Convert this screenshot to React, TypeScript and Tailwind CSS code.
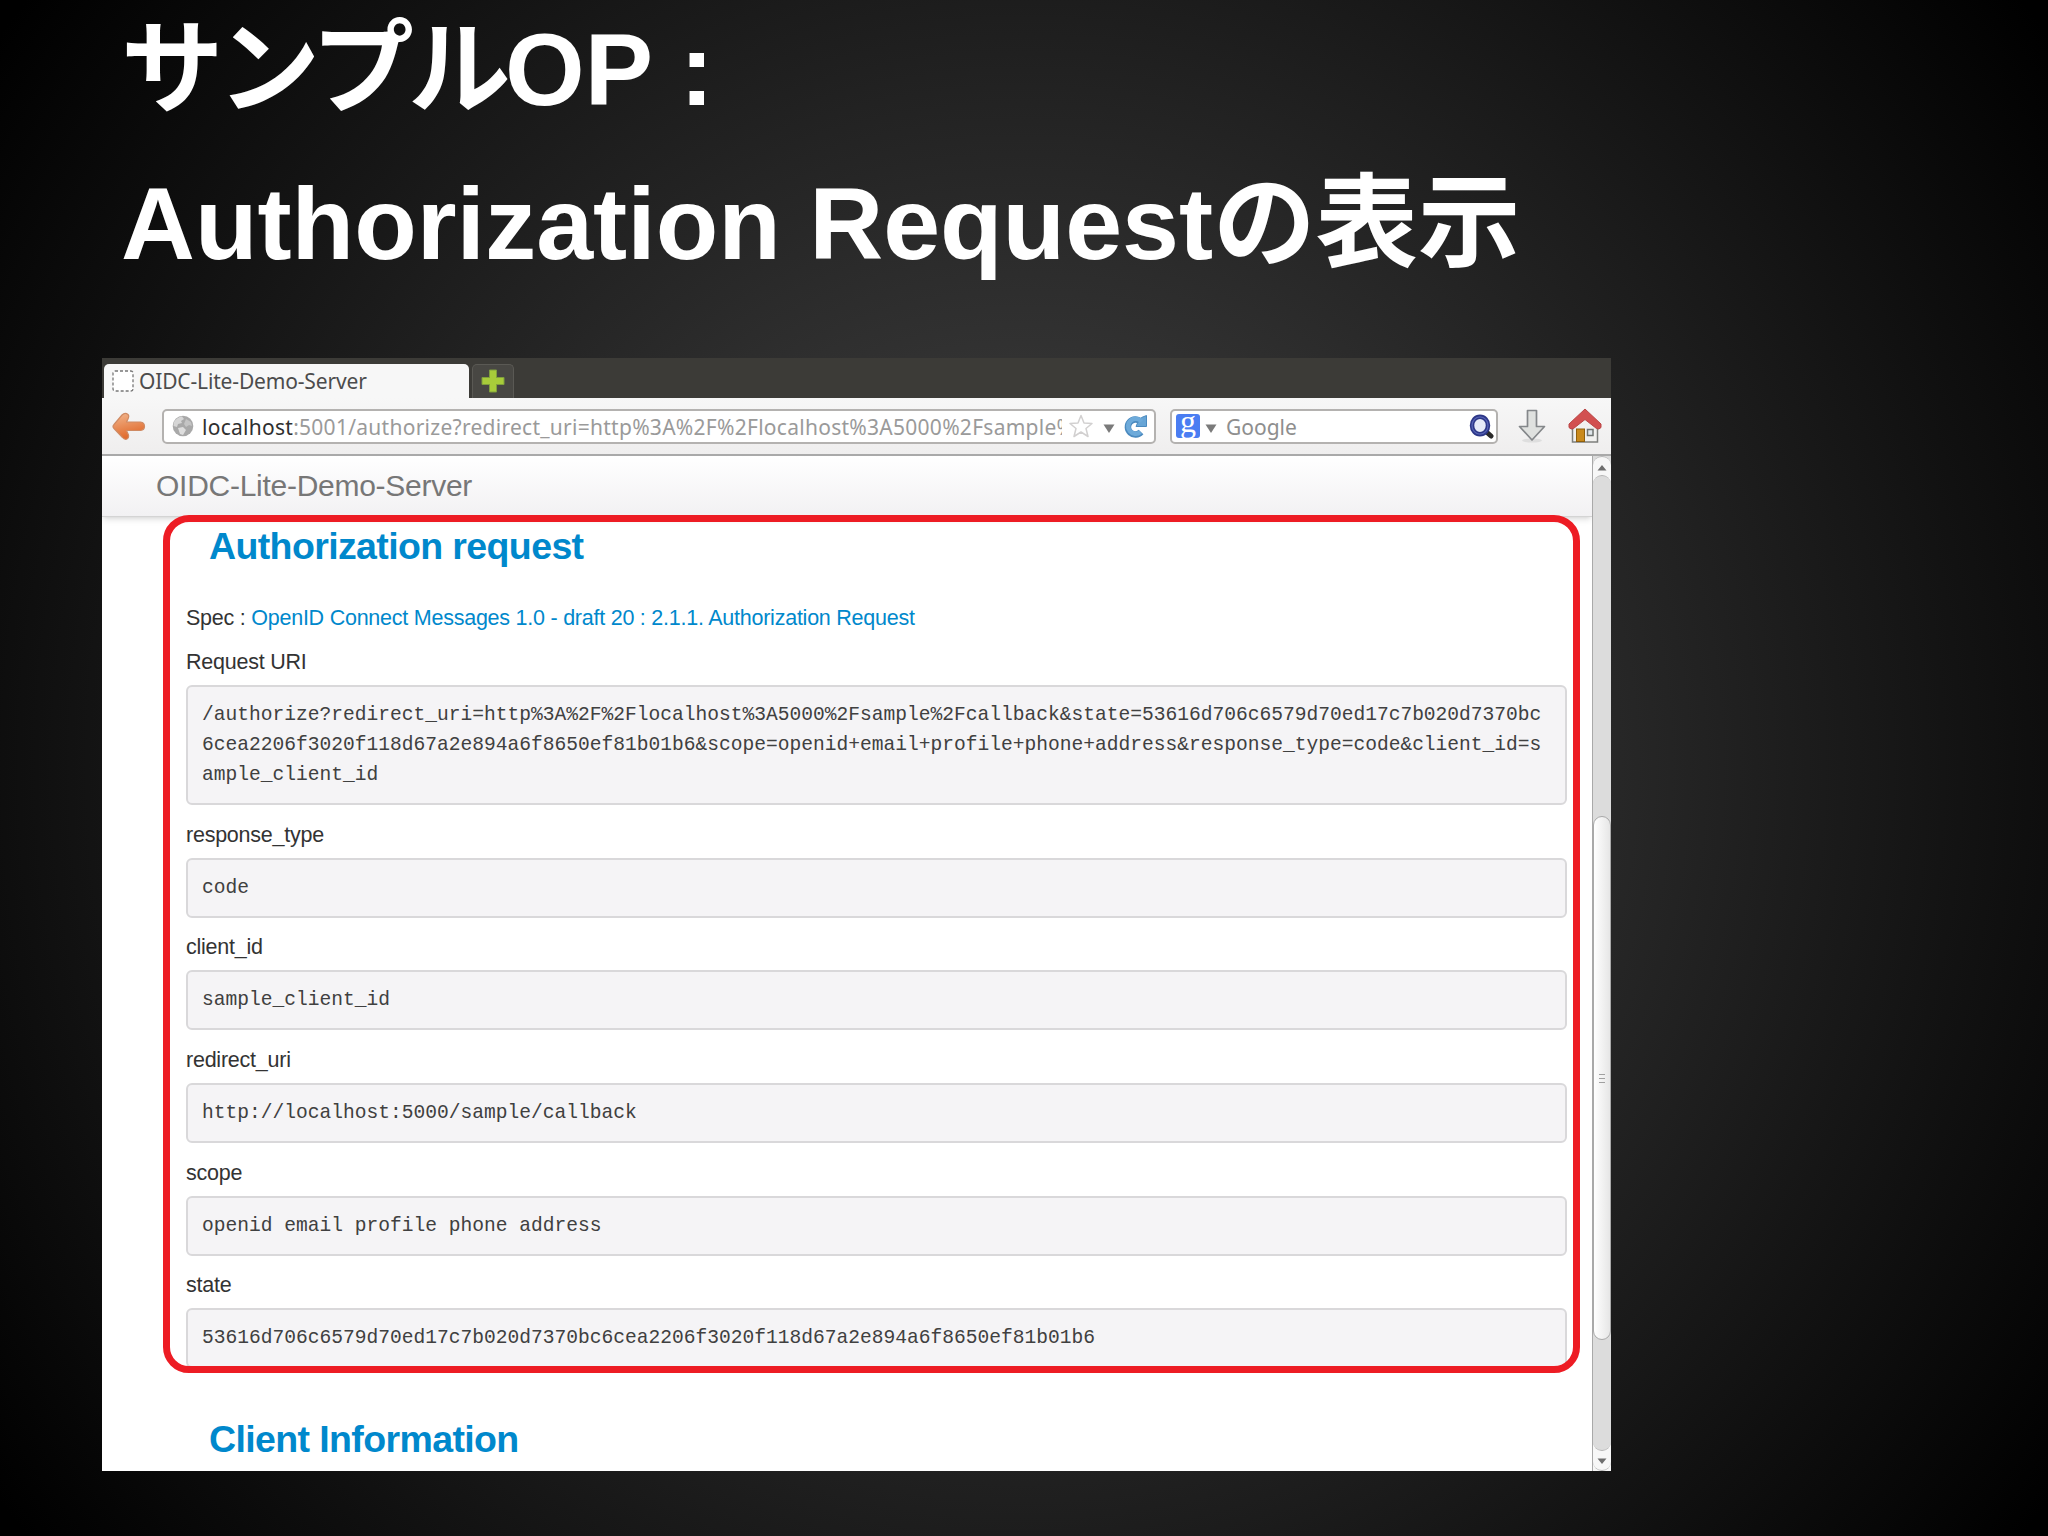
const params = [
  { name: 'response_type', value: 'code' },
  { name: 'client_id', value: 'sample_client_id' },
  { name: 'redirect_uri', value: 'http://localhost:5000/sample/callback' },
  { name: 'scope', value: 'openid email profile phone address' },
  { name: 'state', value: '53616d706c6579d70ed17c7b020d7370bc6cea2206f3020f118d67a2e894a6f8650ef81b01b6' },
];

const requestUri =
  '/authorize?redirect_uri=http%3A%2F%2Flocalhost%3A5000%2Fsample%2Fcallback&state=53616d706c6579d70ed17c7b020d7370bc6cea2206f3020f118d67a2e894a6f8650ef81b01b6&scope=openid+email+profile+phone+address&response_type=code&client_id=sample_client_id';

function BackIcon() {
  return (
    <svg width="34" height="30" viewBox="0 0 34 30">
      <defs>
        <linearGradient id="back" x1="0" y1="0" x2="0.3" y2="1">
          <stop offset="0" stopColor="#f2b78f" />
          <stop offset="1" stopColor="#e0692a" />
        </linearGradient>
      </defs>
      <path
        d="M1 15.500 Q1 14.500 2 13.500 L10 4 Q13 0.800 16 3.500 Q17.500 5 16 8 L14.500 11 H28.500 Q32.500 11.500 32.500 15.500 Q32.500 19 28.500 19.500 H14.500 L16.500 24 Q17 27 15 28 Q12.500 29 10.500 26.500 L2 17.500 Q1 16.500 1 15.500 Z"
        fill="url(#back)"
        stroke="#cf8a63"
        strokeWidth="1.200"
        strokeLinejoin="round"
      />
    </svg>
  );
}

function GlobeIcon() {
  return (
    <svg width="22" height="22" viewBox="0 0 22 22">
      <circle cx="11" cy="11" r="10.300" fill="#a9a9a9" />
      <path d="M2 7 Q5 2 10 1.500 L12 4 L9 6 L10 8 L6 9 L5 12 L1.500 11 Z" fill="#d6d6d6" />
      <path d="M14 4 L19 7 L20 11 L17 10 L14 12 L12 9 Z" fill="#c4c4c4" />
      <path d="M6 13 L11 12 L14 15 L11 20 L8 19 Z" fill="#dedede" />
    </svg>
  );
}

function ReloadIcon() {
  return (
    <svg width="24" height="25" viewBox="0 0 24 25">
      <path d="M17 18 A7.500 7.500 0 1 1 16.500 7.500" fill="none" stroke="#4b8abf" strokeWidth="6.500" />
      <path d="M17.500 3.500 L22.500 1.500 V12.500 H12 L13.500 9 Z" fill="#67a5d6" stroke="#4b8abf" strokeLinejoin="round" />
      <path d="M16.500 18 A7.500 7.500 0 1 1 17.500 7.500" fill="none" stroke="#6daada" strokeWidth="4.500" />
    </svg>
  );
}

function SearchIcon() {
  return (
    <svg width="25" height="25" viewBox="0 0 25 25">
      <path d="M17.500 18 L22 22" stroke="#2a2a2a" strokeWidth="5" strokeLinecap="round" />
      <ellipse cx="11" cy="11.500" rx="8" ry="8.700" fill="#e6ebf8" stroke="#2d3788" strokeWidth="4.500" />
      <ellipse cx="11" cy="11.500" rx="8" ry="8.700" fill="none" stroke="#5664b5" strokeWidth="1.300" />
    </svg>
  );
}

function DownloadIcon() {
  return (
    <svg width="28" height="34" viewBox="0 0 28 34">
      <ellipse cx="14" cy="31.500" rx="10" ry="2" fill="#dedede" />
      <path
        d="M9.500 1.500 H18.500 V17.500 H26.500 L14 31 L1.500 17.500 H9.500 Z"
        fill="#dfe1df"
        stroke="#84878a"
        strokeWidth="1.700"
        strokeLinejoin="round"
      />
    </svg>
  );
}

function HomeIcon() {
  return (
    <svg width="34" height="36" viewBox="0 0 34 36">
      <path d="M4.500 18 L17 7 L29.500 18 V34 H4.500 Z" fill="#f1f1ef" stroke="#7d7f7c" strokeWidth="1.500" />
      <rect x="8.500" y="21" width="8" height="12.500" fill="#c98a1c" stroke="#8f5f0c" />
      <rect x="19.500" y="21.500" width="5.500" height="6" fill="#dfe6ea" stroke="#6f7472" strokeWidth="1.500" />
      <path
        d="M17 1 L33 16 V19.500 Q31 22 28.500 20.500 L17 11.500 L5.500 20.500 Q3 22 1 19.500 V16 Z"
        fill="#d25050"
        stroke="#b94646"
        strokeLinejoin="round"
      />
    </svg>
  );
}

function Chevron() {
  return (
    <svg width="12" height="9" viewBox="0 0 12 9">
      <path d="M0.500 0.500 H11.500 L6 9 Z" fill="#7a7a7a" />
    </svg>
  );
}

function TabStrip() {
  return (
    <div className="flex h-10 items-end bg-[#3c3b37] pl-[2px]">
      <div className="flex h-[34px] w-[365px] items-center rounded-t-[5px] bg-[#f7f7f7] pl-2">
        <svg width="22" height="22" viewBox="0 0 22 22">
          <rect x="1" y="1" width="20" height="20" rx="2" fill="#fff" stroke="#777" strokeWidth="1.300" strokeDasharray="3 2" />
        </svg>
        <span className="ml-[5px] whitespace-nowrap pt-px font-['Noto_Sans',sans-serif] text-[21px] tracking-[-0.160px] text-[#4c4c4c]">
          OIDC-Lite-Demo-Server
        </span>
      </div>
      <div className="ml-[3px] flex h-[34px] w-[42px] items-center justify-center rounded-t-[5px] border border-b-0 border-[#5a5954] bg-[#484743] pb-[2px]">
        <svg width="24" height="24" viewBox="0 0 24 24">
          <path d="M8.500 1 H15.500 V8.500 H23 V15.500 H15.500 V23 H8.500 V15.500 H1 V8.500 H8.500 Z" fill="#a8cc3a" stroke="#7f9f3c" />
        </svg>
      </div>
    </div>
  );
}

function Toolbar() {
  return (
    <div className="flex h-[58px] items-center border-b-2 border-[#a9a9a9] bg-linear-to-b from-[#f7f7f7] to-[#efeeee] pl-[10px] font-['Noto_Sans',sans-serif] text-[21px]">
      <BackIcon />
      <div className="ml-4 flex h-[35px] w-[994px] items-center rounded-[5px] border-2 border-[#b4b2b0] bg-white pl-2">
        <GlobeIcon />
        <div className="ml-2 w-[860px] overflow-hidden whitespace-nowrap pt-[3px] tracking-[0.270px] text-[#9a9a9a]">
          <span className="text-[#2f2f2f]">localhost</span>
          :5001/authorize?redirect_uri=http%3A%2F%2Flocalhost%3A5000%2Fsample%
        </div>
        <svg className="ml-[7px]" width="24" height="24" viewBox="0 0 24 24">
          <path d="M12 1.500 L15 9 L23 9.500 L17 14.500 L19 22.500 L12 18 L5 22.500 L7 14.500 L1 9.500 L9 9 Z" fill="#fff" stroke="#d2d0d0" strokeWidth="1.500" strokeLinejoin="round" />
        </svg>
        <div className="ml-[10px] pt-1">
          <Chevron />
        </div>
        <div className="ml-[9px]">
          <ReloadIcon />
        </div>
      </div>
      <div className="ml-[14px] flex h-[35px] w-[328px] items-center rounded-[5px] border-2 border-[#b4b2b0] bg-white pl-1">
        <div className="flex h-6 w-6 items-center justify-center rounded-[3px] bg-[#4a7df2] pb-[11px] font-['Liberation_Serif',serif] text-[32px] leading-none text-white">
          g
        </div>
        <div className="ml-[5px] pt-1">
          <Chevron />
        </div>
        <span className="ml-[9px] pt-[3px] text-[#8e8e8e]">Google</span>
        <div className="ml-auto pr-[2px]">
          <SearchIcon />
        </div>
      </div>
      <div className="ml-[20px]">
        <DownloadIcon />
      </div>
      <div className="ml-[22px]">
        <HomeIcon />
      </div>
    </div>
  );
}

function Scrollbar() {
  return (
    <div className="flex w-[19px] flex-col border-l border-[#a9a9a9] bg-[#dcdcdc]">
      <div className="h-[360px] bg-[#dcdcdc]">
        <div className="flex h-[34px] justify-center rounded-t-full border-t border-[#b5b5b5] bg-[#f7f7f7] pt-[8px]">
          <svg width="10" height="6" viewBox="0 0 10 6">
            <path d="M0.500 5.500 H9.500 L5 0 Z" fill="#6e6e6e" />
          </svg>
        </div>
        <div className="-mt-[15px] h-[341px] rounded-t-full border-t border-[#b5b5b5] bg-[#dcdcdc]" />
      </div>
      <div className="flex h-[524px] flex-col items-center justify-center gap-[3px] rounded-full border border-[#a9a9a9] bg-linear-to-r from-white to-[#e6e6e6]">
        <div className="h-px w-[6px] bg-[#a0a0a0]" />
        <div className="h-px w-[6px] bg-[#a0a0a0]" />
        <div className="h-px w-[6px] bg-[#a0a0a0]" />
      </div>
      <div className="flex flex-1 flex-col justify-end bg-[#f7f7f7]">
        <div className="flex-1 rounded-b-full border-b border-[#b5b5b5] bg-[#dcdcdc]" />
        <div className="flex h-[20px] items-center justify-center rounded-b-full border-b border-[#b5b5b5]">
          <svg width="10" height="6" viewBox="0 0 10 6">
            <path d="M0.500 0.500 H9.500 L5 6 Z" fill="#6e6e6e" />
          </svg>
        </div>
      </div>
    </div>
  );
}

function Pre({ children }: { children: string }) {
  return (
    <pre className="w-[1381px] whitespace-pre-wrap break-all rounded-[6px] border-2 border-[#d9d8da] bg-[#f5f4f6] px-[14px] py-[13px] font-['Liberation_Mono',monospace] text-[19.590px] leading-[30px] text-[#404040]">
      {children}
    </pre>
  );
}

export default function App() {
  return (
    <div className="h-[1536px] w-[2048px] overflow-hidden bg-[radial-gradient(circle_at_50%_50%,#4a4a4a_0px,#000_1260px)]">
      {/* Slide title */}
      <h1 className="-mt-[7px] h-[365px] whitespace-nowrap pl-[121px] font-['Liberation_Sans','Noto_Sans_CJK_JP',sans-serif] text-[102.400px] font-bold leading-[153.600px] text-white">
        <span className="tracking-[-5.600px]">サンプル</span>OP :
        <br />
        Authorization Requestの表示
      </h1>

      {/* Browser window */}
      <div className="ml-[102px] flex h-[1113px] w-[1509px] flex-col overflow-hidden bg-white">
        <TabStrip />
        <Toolbar />
        <div className="flex flex-1 overflow-hidden">
          <div className="relative flex-1 overflow-hidden font-['Liberation_Sans',sans-serif] text-[#333]">
            <div className="h-[61px] border-b border-[#d4d4d4] bg-linear-to-b from-white to-[#f2f1f3] pl-[54px] text-[30px] leading-[60px] tracking-[-0.270px] text-[#777] shadow-md">
              OIDC-Lite-Demo-Server
            </div>

            <div className="pl-[84px] text-[21.500px] tracking-[-0.240px]">
              <h2 className="h-[86px] pl-[23px] text-[37.500px] font-bold leading-[58px] tracking-[-0.620px] text-[#0088cc]">
                Authorization request
              </h2>
              <p className="h-[45px] leading-[30px]">
                Spec : <a className="text-[#0088cc]">OpenID Connect Messages 1.0 - draft 20 : 2.1.1. Authorization Request</a>
              </p>
              <p className="h-[37px] leading-[29px]">Request URI</p>
              <div className="tracking-normal">
                <Pre>{requestUri}</Pre>
              </div>
              {params.map((param) => (
                <div key={param.name} className="pt-[15.700px]">
                  <p className="h-[37px] leading-[28px]">{param.name}</p>
                  <div className="tracking-normal">
                    <Pre>{param.value}</Pre>
                  </div>
                </div>
              ))}
              <h2 className="pl-[23px] pt-[42px] text-[37.500px] font-bold leading-[58px] tracking-[-0.620px] text-[#0088cc]">
                Client Information
              </h2>
            </div>

            {/* Highlight around the request parameters */}
            <div className="absolute left-[61px] top-[59px] h-[858px] w-[1417px] rounded-[26px] border-[7px] border-[#ed1c24]" />
          </div>
          <Scrollbar />
        </div>
      </div>
    </div>
  );
}
